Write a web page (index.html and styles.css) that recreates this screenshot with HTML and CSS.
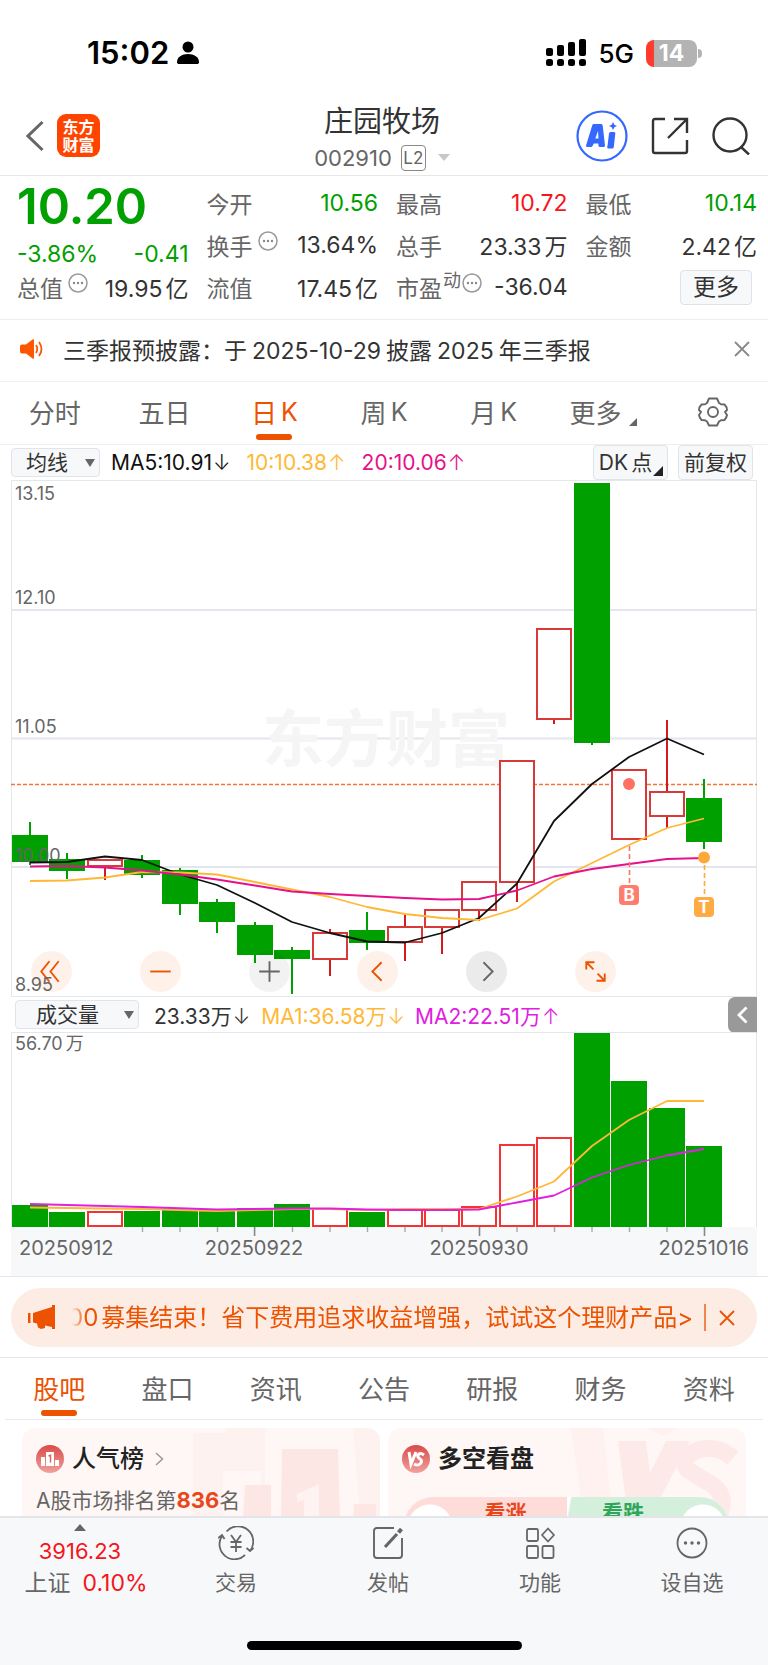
FILE: index.html
```html
<!DOCTYPE html>
<html lang="zh-CN">
<head>
<meta charset="utf-8">
<meta name="viewport" content="width=device-width, initial-scale=1">
<title>庄园牧场 002910</title>
<link rel="stylesheet" href="styles.css">
</head>
<body>
<div class="app">
  <div class="status">
    <div class="status-left">
      <span class="clock">15:02</span>
      <svg width="22" height="24" viewBox="0 0 22 24"><circle cx="11" cy="6" r="5.5"/><path d="M0 21c0-5 5-8 11-8s11 3 11 8c0 1.500-.8 2-2 2H2c-1.200 0-2-.5-2-2z"/></svg>
    </div>
    <div class="status-right">
      <svg width="40" height="28" viewBox="0 0 40 28"><rect x="0" y="9" width="7" height="8" rx="2"/><rect x="11" y="6" width="7" height="11" rx="2"/><rect x="22" y="3" width="7" height="14" rx="2"/><rect x="33" y="0" width="7" height="17" rx="2"/><rect x="0" y="20" width="7" height="7" rx="2.500"/><rect x="11" y="20" width="7" height="7" rx="2.500"/><rect x="22" y="20" width="7" height="7" rx="2.500"/><rect x="33" y="20" width="7" height="7" rx="2.500"/></svg>
      <span class="net">5G</span>
      <span class="battery">14</span>
    </div>
  </div>

  <header class="head">
    <div class="head-left">
      <button class="plain" aria-label="返回"><svg width="18" height="32" viewBox="0 0 18 32" fill="none" stroke="#666" stroke-width="3"><path d="M16.500 2L2 16l14.500 14"/></svg></button>
      <a class="logo" href="#"><span>东方</span><span>财富</span></a>
    </div>
    <div class="head-title">
      <h1>庄园牧场</h1>
      <div class="code"><span>002910</span><span class="level">L2</span><i class="caret"></i></div>
    </div>
    <div class="head-right">
      <button class="plain" aria-label="Ai"><svg width="52" height="52" viewBox="0 0 52 52"><circle cx="26" cy="26" r="24.500" fill="none" stroke="#3468ff" stroke-width="2.200"/><path fill="#3468ff" fill-rule="evenodd" d="M17.500 14h7.500q1.500 0 1.700 1.500l2.300 20q0 1.500-1.500 1.500h-3.500q-1.500 0-1.500-1.500l-.2-2h-4.500l-1 2q-.7 1.500-2 1.500h-3.500q-2 0-1.200-1.800l6-19.500q.4-1.700 1.400-1.700zM22 21l-2.700 7.500h3.200zM34.500 22h3.500q1.500 0 1.300 1.500l-1.500 13.500q-.2 1.500-1.600 1.500h-3.700q-1.500 0-1.300-1.500l.5-2.500 1.300-11q.2-1.500 1.500-1.500zM37 12l1.300 2.700 2.700 1.300-2.700 1.300-1.300 2.700-1.300-2.700-2.700-1.300 2.700-1.300z"/></svg></button>
      <button class="plain" aria-label="分享"><svg width="38" height="38" viewBox="0 0 38 38" fill="none" stroke="#333" stroke-width="2.400"><path d="M14 2H4q-2 0-2 2v30q0 2 2 2h30q2 0 2-2V23M23 2h13v14M36 2L17 21"/></svg></button>
      <button class="plain" aria-label="搜索"><svg width="38" height="38" viewBox="0 0 38 38" fill="none" stroke="#333" stroke-width="2.400"><circle cx="18" cy="18" r="16.500"/><path d="M29 30l8 7.500"/></svg></button>
    </div>
  </header>

  <main class="content">
    <section class="quote">
      <div class="quote-col">
        <div class="price">10.20</div>
        <div class="change down"><span>-3.86%</span><span>-0.41</span></div>
        <div class="row"><span class="key">总值<svg class="info" width="20" height="20" viewBox="0 0 20 20"><circle cx="10" cy="10" r="9" fill="none" stroke="#999" stroke-width="1.500"/><g fill="#888"><circle cx="6" cy="10" r="1.200"/><circle cx="10" cy="10" r="1.200"/><circle cx="14" cy="10" r="1.200"/></g></svg></span><span>19.95<span class="unit">亿</span></span></div>
      </div>
      <div class="quote-col">
        <div class="row"><span class="key">今开</span><span class="down">10.56</span></div>
        <div class="row"><span class="key">换手<svg class="info" width="20" height="20" viewBox="0 0 20 20"><circle cx="10" cy="10" r="9" fill="none" stroke="#999" stroke-width="1.500"/><g fill="#888"><circle cx="6" cy="10" r="1.200"/><circle cx="10" cy="10" r="1.200"/><circle cx="14" cy="10" r="1.200"/></g></svg></span><span>13.64%</span></div>
        <div class="row"><span class="key">流值</span><span>17.45<span class="unit">亿</span></span></div>
      </div>
      <div class="quote-col">
        <div class="row"><span class="key">最高</span><span class="up">10.72</span></div>
        <div class="row"><span class="key">总手</span><span>23.33<span class="unit">万</span></span></div>
        <div class="row"><span class="key">市盈<span class="sup">动</span><svg class="info tight" width="20" height="20" viewBox="0 0 20 20"><circle cx="10" cy="10" r="9" fill="none" stroke="#999" stroke-width="1.500"/><g fill="#888"><circle cx="6" cy="10" r="1.200"/><circle cx="10" cy="10" r="1.200"/><circle cx="14" cy="10" r="1.200"/></g></svg></span><span>-36.04</span></div>
      </div>
      <div class="quote-col">
        <div class="row"><span class="key">最低</span><span class="down">10.14</span></div>
        <div class="row"><span class="key">金额</span><span>2.42<span class="unit">亿</span></span></div>
        <div class="row end"><button class="more">更多</button></div>
      </div>
    </section>

    <section class="notice">
      <svg width="24" height="22" viewBox="0 0 24 22"><path fill="#ff5500" d="M2 6.500h4L12.500 1.500q1.500-1 1.500.8v17.400q0 1.800-1.500.8L6 15.500H2q-2 0-2-2v-5q0-2 2-2z"/><path fill="none" stroke="#ff5500" stroke-width="1.800" d="M16 7q2.500 4 0 8M19 4q5 7 0 14"/></svg>
      <p>三季报预披露：于<span class="num">2025-10-29</span>披露<span class="num">2025</span>年三季报</p>
      <button class="plain" aria-label="关闭"><svg width="16" height="16" viewBox="0 0 16 16" fill="none" stroke="#888" stroke-width="1.800"><path d="M1 1l14 14M15 1L1 15"/></svg></button>
    </section>

    <nav class="ktabs">
      <button>分时</button>
      <button>五日</button>
      <button class="on">日<span class="kk">K</span></button>
      <button>周<span class="kk">K</span></button>
      <button>月<span class="kk">K</span></button>
      <button>更多<i class="corner"></i></button>
      <button aria-label="设置"><svg width="30" height="30" viewBox="0 0 30 30" fill="none" stroke="#666" stroke-width="1.900" stroke-linejoin="round"><path d="M11 1.500h8l2 4.500 2 1.200 3.500.3q2.500 2.500 2.500 5.500l-2 2 2 3q-.5 3-2.500 5l-3.500.3-2 1.200-2 4h-8l-2-4-2-1.200-3.500-.3Q1.500 21 1 18l2-3-2-2q0-3 2.500-5.500L7 7.200 9 6z"/><circle cx="15" cy="15" r="5"/></svg></button>
    </nav>

    <section class="market">
      <div class="bar">
        <span class="pick pick-ma"><select aria-label="指标"><option>均线</option></select></span>
        <span class="ma5">MA5:10.91<span class="arrow">↓</span></span>
        <span class="ma10">10:10.38<span class="arrow">↑</span></span>
        <span class="ma20">20:10.06<span class="arrow">↑</span></span>
        <div class="bar-right">
          <button class="chip">DK<span class="unit">点</span><i class="corner dark"></i></button>
          <button class="chip">前复权</button>
        </div>
      </div>

      <div class="kchart">
        <svg class="plot" viewBox="11 0 746 517">
          <g class="grid"><path d="M11.500 .5H756.500V516.500H11.500z"/><path d="M11 130H757M11 258.500H757M11 387H757" stroke-width="2"/></g>
          <text class="mark" x="262" y="282">东方财富</text>
          <path d="M11 304.500H757" stroke="#f0763a" stroke-width="1.600" stroke-dasharray="4 2"/>
          <g class="g">
            <path d="M30 342V385M67 373V399M142 375V398M180 388V435M217 419V453M255 442V483M292 467V514M367 432V470M592 3V265M704 299V369"/>
            <rect x="12" y="355" width="36" height="27"/><rect x="49" y="379" width="36" height="12"/><rect x="124" y="380" width="36" height="15"/><rect x="162" y="390" width="36" height="34"/><rect x="199" y="422" width="36" height="20"/><rect x="237" y="445" width="36" height="30"/><rect x="274" y="470" width="36" height="9"/><rect x="349" y="450" width="36" height="13"/><rect x="574" y="3" width="36" height="260"/><rect x="686" y="318" width="36" height="44"/>
          </g>
          <g class="r">
            <path d="M105 387V400M330 449V453M330 479V496M405 434V446M405 461V481M442 447V474M479 430V441M517 402V422M554 239V244M667 240V311M667 336V348"/>
            <rect x="88" y="380" width="34" height="6"/><rect x="313" y="453" width="34" height="26"/><rect x="388" y="447" width="34" height="15"/><rect x="425" y="430" width="34" height="17"/><rect x="462" y="402" width="34" height="28"/><rect x="500" y="281" width="34" height="121"/><rect x="537" y="149" width="34" height="90"/><rect x="612" y="290" width="34" height="69"/><rect x="650" y="312" width="34" height="24"/>
          </g>
          <g class="axis">
            <text x="15" y="20">13.15</text><text x="15" y="124">12.10</text><text x="15" y="253">11.05</text><text x="15" y="382">10.00</text>
          </g>
          <g class="line">
            <path stroke="#111" d="M30 382.500L67 382 105 376.500 142 380 180 394.500 217 405 255 423 292 442 330 453 367 461.500 405 462.500 442 453 479 438 517 403.500 554 341 592 304 629 277 667 258.500 704 274.500"/>
            <path stroke="#ffb836" d="M30 401L67 400.500 105 397.500 142 392 180 392.500 217 394.500 255 402 292 409.500 330 417 367 427 405 434 442 438 479 440 517 428.500 554 401.500 592 383 629 365 667 348 704 338.500"/>
            <path stroke="#e5118b" d="M30 386.500L67 386 105 387.500 142 390.500 180 394.500 217 399.500 255 405.500 292 411.500 330 414 367 416 405 418 442 419.500 479 419 517 410.500 554 396.500 592 389 629 384 667 379 704 378"/>
          </g>
          <circle cx="629" cy="304" r="6" fill="#ff7262"/><circle cx="704" cy="377.500" r="6" fill="#ffa83a"/>
          <path d="M629.500 366V405" stroke="#ff7262" stroke-width="1.600" stroke-dasharray="5 3"/><path d="M704.500 385V417" stroke="#ffa83a" stroke-width="1.600" stroke-dasharray="5 3"/>
          <rect x="619" y="405" width="20" height="20" rx="4" fill="#ff7d6e"/><text class="flag" x="629" y="421">B</text>
          <rect x="694" y="417" width="20" height="20" rx="4" fill="#ffab43"/><text class="flag" x="704" y="433">T</text>
        </svg>
        <div class="tools">
          <button aria-label="最早"><svg viewBox="0 0 40 40"><path d="M18 10l-8 10 8 10M27 10l-8 10 8 10"/></svg></button>
          <button aria-label="缩小"><svg viewBox="0 0 40 40"><path d="M10 20h20"/></svg></button>
          <button class="gray light" aria-label="放大"><svg viewBox="0 0 40 40"><path d="M10 20h20M20 10v20"/></svg></button>
          <button aria-label="向左"><svg viewBox="0 0 40 40"><path d="M24 11l-9 9 9 9"/></svg></button>
          <button class="gray" aria-label="向右"><svg viewBox="0 0 40 40"><path d="M17 11l9 9-9 9"/></svg></button>
          <button aria-label="全屏"><svg viewBox="0 0 40 40"><path d="M11 18v-7h8M11 11l7 7M29 22v7h-8M29 29l-7-7"/></svg></button>
        </div>
        <span class="low">8.95</span>
      </div>

      <div class="bar bar-vol">
        <span class="pick pick-vol"><select aria-label="副图指标"><option>成交量</option></select></span>
        <span class="vol">23.33万<span class="arrow">↓</span></span>
        <span class="ma10">MA1:36.58万<span class="arrow">↓</span></span>
        <span class="vma2">MA2:22.51万<span class="arrow">↑</span></span>
        <button class="fold" aria-label="展开"><svg width="11" height="18" viewBox="0 0 11 18" fill="none" stroke="#fff" stroke-width="2.800"><path d="M9.500 1.500L2 9l7.500 7.500"/></svg></button>
      </div>

      <svg class="plot" viewBox="11 0 746 244">
        <rect x="11" y="195" width="746" height="49" fill="#f7f8fa"/>
        <path class="frame" d="M11.500 195V.5H756.500V195"/>
        <text class="axis" x="15" y="18">56.70<tspan dx="3">万</tspan></text>
        <g class="g">
          <rect x="12" y="173" width="36" height="22"/><rect x="49" y="180" width="36" height="15"/><rect x="124" y="179" width="36" height="16"/><rect x="162" y="178" width="36" height="17"/><rect x="199" y="179" width="36" height="16"/><rect x="237" y="176" width="36" height="19"/><rect x="274" y="172" width="36" height="23"/><rect x="349" y="180" width="36" height="15"/><rect x="574" y="1" width="36" height="194"/><rect x="611" y="49" width="36" height="146"/><rect x="649" y="76" width="36" height="119"/><rect x="686" y="114" width="36" height="81"/>
        </g>
        <g class="r bright">
          <rect x="88" y="180" width="34" height="14"/><rect x="313" y="177" width="34" height="17"/><rect x="388" y="178" width="34" height="16"/><rect x="425" y="178" width="34" height="16"/><rect x="462" y="175" width="34" height="19"/><rect x="500" y="113" width="34" height="81"/><rect x="537" y="106" width="34" height="88"/>
        </g>
        <g class="line">
          <path stroke="#ffb836" d="M30 175.500L67 176 142 177 217 179 255 178 292 177 330 177 367 178 405 177 442 177 479 177 517 164.500 554 149.500 592 114 629 88 667 69 704 69"/>
          <path stroke="#e020e0" d="M30 172L105 174 142 175 217 177.500 292 176.500 330 176.500 367 177.500 405 178 442 178 479 177.500 517 170.500 554 163.500 592 145.500 629 133 667 123.500 704 117"/>
        </g>
        <path stroke="#aaa" stroke-width="1.400" d="M142.500 195v5M180 195v5M217.500 195v5M292.500 195v5M330 195v5M367.500 195v5M405 195v5M442 195v5M517 195v5M554.500 195v5M592 195v5M629.500 195v5M667 195v5"/>
        <path stroke="#888" stroke-width="1.600" d="M254.600 195v9M479.500 195v9M704.500 195v9"/>
        <g class="date"><text x="19" y="223">20250912</text><text x="254" y="223" text-anchor="middle">20250922</text><text x="479" y="223" text-anchor="middle">20250930</text><text x="749" y="223" text-anchor="end">20251016</text></g>
      </svg>
    </section>

    <section class="promo-wrap">
      <div class="promo">
        <svg width="28" height="25" viewBox="0 0 28 25" fill="#ec5200"><path d="M0 8h2.500v10H0zM5 8L24 2V0h3v24h-3v-2l-7-1.500V23l-4 1-3-1.500-1-4-4-1z"/></svg>
        <p><a href="#">00<span class="unit">募集结束！省下费用追求收益增强，试试这个理财产品&gt;</span></a></p>
        <button class="plain" aria-label="关闭广告"><svg width="16" height="16" viewBox="0 0 16 16" fill="none" stroke="#ec5200" stroke-width="1.800"><path d="M1 1l14 14M15 1L1 15"/></svg></button>
      </div>
    </section>

    <nav class="tabs">
      <button class="on">股吧</button><button>盘口</button><button>资讯</button><button>公告</button><button>研报</button><button>财务</button><button>资料</button>
    </nav>

    <section class="cards">
      <article class="card">
        <svg class="deco" width="190" height="90" viewBox="0 0 190 90"><path fill="#fef2f0" d="M3 5h32V0h40v90H3zM163 0h27v90h-20z"/><path fill="#fff7f5" d="M33 43h38v47H33z"/><path fill="#fce7e5" d="M55 57h26v33H53zM92 21h56l2 69H91zM164 76h22v14h-23z"/><path fill="#fff3f1" d="M107 66l22-10v34h-15V72l-7 2z"/></svg>
        <h2><svg width="28" height="28" viewBox="0 0 28 28"><defs><linearGradient id="rd" x1="0" y1="0" x2="0" y2="1"><stop offset="0" stop-color="#d94b48"/><stop offset="1" stop-color="#f0a19d"/></linearGradient></defs><circle cx="14" cy="14" r="14" fill="url(#rd)"/><path fill="#fff" d="M5 12h4v9H5zM10 7h8v14h-8zM19 15h4v6h-4z"/><path fill="none" stroke="#d96460" stroke-width="1.500" d="M12.500 11l2-.7v7.200"/></svg>人气榜<svg class="go" width="9" height="14" viewBox="0 0 9 14" fill="none" stroke="#999" stroke-width="1.500"><path d="M1 1l6.500 6L1 13"/></svg></h2>
        <p class="rank">A股市场排名第<b>836</b>名</p>
      </article>
      <article class="card">
        <svg class="deco" width="180" height="90" viewBox="0 0 180 90"><path fill="#fef1ef" d="M5 0h32l10 90H18zM80 0h30l-12 8z"/><path fill="#fdeae8" d="M52 13h28l4 32 16-32h24L84 90H62z"/><path fill="none" stroke="#fdeae8" stroke-width="17" d="M167 30Q150 16 132 22q-20 8-10 20l26 16q14 12 4 32"/></svg>
        <h2><svg width="28" height="28" viewBox="0 0 28 28"><circle cx="14" cy="14" r="14" fill="url(#rd)"/><path fill="none" stroke="#fff" stroke-width="3" d="M7 7l2 12 5-12M22 10q-4-3-6 0-1 2 2 4t0 5q-2 2-6 0"/></svg>多空看盘</h2>
        <div class="vote"><button class="vote-up">看涨</button><button class="vote-down">看跌</button></div>
      </article>
    </section>
  </main>

  <footer class="dock">
    <div class="dock-row">
      <button class="index"><i class="tri"></i><span class="up">3916.23</span><span class="dock-label">上证<span class="up pct">0.10%</span></span></button>
      <button class="dock-item"><svg width="36" height="34" viewBox="0 0 36 34" fill="none" stroke="#666" stroke-width="1.800"><path d="M8.500 5.500a15 15 0 0 1 23 20M27 29A15 15 0 0 1 4 10M0 12l4-3 2.500 4M28.500 22l3.500 3 3.500-3M13 9l5 7 5-7M12.500 16h11M12.500 21h11M18 16v10"/></svg><span>交易</span></button>
      <button class="dock-item"><svg width="34" height="34" viewBox="0 0 34 34" fill="none" stroke="#666" stroke-width="1.900"><path d="M23 2H6Q3 2 3 5v24q0 3 3 3h22q3 0 3-3V12"/><path stroke-width="3.200" d="M14 21L26 8"/><path stroke-width="4" d="M27.500 6.500L30.500 3"/></svg><span>发帖</span></button>
      <button class="dock-item"><svg width="30" height="34" viewBox="0 0 30 34" fill="none" stroke="#666" stroke-width="1.800"><rect x="2" y="3" width="11" height="12" rx="1.500"/><rect x="2" y="20" width="11" height="12" rx="1.500"/><rect x="17.500" y="20" width="11" height="12" rx="1.500"/><path stroke-linejoin="round" d="M23 2.500l6 6.500-6 6.500L17 9z"/></svg><span>功能</span></button>
      <button class="dock-item"><svg width="34" height="34" viewBox="0 0 34 34"><circle cx="17" cy="17" r="14.500" fill="none" stroke="#666" stroke-width="1.800"/><g fill="#666"><circle cx="10.500" cy="17" r="1.700"/><circle cx="17" cy="17" r="1.700"/><circle cx="23.500" cy="17" r="1.700"/></g></svg><span>设自选</span></button>
    </div>
    <div class="home"></div>
  </footer>
</div>
</body>
</html>
```
FILE: styles.css
```css
* { box-sizing: border-box; margin: 0; padding: 0; }
body { font-family: Inter, "Noto Sans CJK SC", sans-serif; color: #333; background: #fff; }
button, select { font: inherit; color: inherit; background: none; border: 0; }
button { cursor: pointer; }
a { color: inherit; text-decoration: none; }
svg { display: block; flex: none; }
i { display: block; }
.plain { display: flex; align-items: center; }
.up { color: #f4161c; }
.down { color: #00a000; }
.unit { margin-left: 3px; }

.app { height: 100vh; display: flex; flex-direction: column; overflow: hidden; }
.content { flex: 1; min-height: 0; overflow-y: auto; scrollbar-width: none; }

.status { flex: none; height: 96px; padding: 10px 67px 0 87px; display: flex; align-items: center; justify-content: space-between; color: #000; }
.status-left { display: flex; align-items: center; gap: 8px; }
.clock { font-size: 31px; font-weight: 600; line-height: 40px; }
.status-right { display: flex; align-items: center; gap: 12px; }
.net { font-size: 26px; font-weight: 500; }
.battery { position: relative; width: 51px; height: 27px; border-radius: 8px; background: linear-gradient(90deg, #ff3b30 8px, #b3b3b3 8px); color: #fff; font-size: 23px; font-weight: 700; line-height: 27px; text-align: center; margin-right: 4px; }
.battery::after { content: ""; position: absolute; left: 52px; top: 9px; width: 4px; height: 9px; border-radius: 0 4px 4px 0; background: #b3b3b3; }

.head { flex: none; height: 80px; padding: 0 18px; display: grid; grid-template-columns: 1fr auto 1fr; align-items: center; border-bottom: 1px solid #e6e6e6; }
.head-left { display: flex; align-items: center; gap: 13px; padding-left: 8px; }
.logo { width: 43px; height: 43px; border-radius: 9px; background: #ff4400; color: #fff; display: flex; flex-direction: column; align-items: center; justify-content: center; font-size: 16px; line-height: 18px; font-weight: 700; }
.head-title { text-align: center; padding: 4px 4px 0 0; }
.head-title h1 { font-size: 29px; line-height: 40px; font-weight: 400; }
.code { display: flex; align-items: center; justify-content: center; gap: 9px; height: 32px; font-size: 22px; color: #666; }
.level { border: 1px solid #888; border-radius: 4px; width: 25px; height: 26px; font-size: 17px; line-height: 24px; }
.caret { border: 6px solid transparent; border-top: 7px solid #c8c8c8; border-bottom: 0; margin-left: 3px; }
.head-right { display: flex; align-items: center; justify-content: flex-end; gap: 23px; }

.quote { display: grid; grid-template-columns: repeat(4, 1fr); gap: 18px; padding: 6px 11px 11px 17px; border-bottom: 1px solid #eee; font-size: 23px; }
.price { height: 49px; line-height: 50px; font-size: 49px; font-weight: 600; color: #00a000; }
.change { height: 35px; padding-top: 7px; line-height: 32px; display: flex; justify-content: space-between; }
.row { height: 42px; display: flex; align-items: center; justify-content: space-between; white-space: nowrap; }
.row.end { justify-content: flex-end; padding-right: 5px; }
.key { display: flex; align-items: center; color: #666; }
.info { margin: 0 0 8px 5px; }
.info.tight { margin-left: 1px; }
.sup { font-size: 18px; line-height: 20px; margin: 0 0 12px 1px; }
.more { width: 72px; height: 35px; line-height: 31px; font-size: 23px; background: #f7f8fa; border: 1px solid #dfe2e9; border-radius: 4px; }

.notice { height: 62px; padding: 0 18px 3px 20px; display: flex; align-items: center; border-bottom: 1px solid #f1f1f1; font-size: 23px; }
.notice p { flex: 1; margin-left: 19px; white-space: nowrap; }
.num { margin: 0 5px; }

.ktabs { height: 63px; display: flex; border-bottom: 1px solid #eee; }
.ktabs button, .tabs button { flex: 1; position: relative; display: flex; align-items: center; justify-content: center; font-size: 26px; color: #666; padding-bottom: 3px; }
.ktabs .kk { margin-left: 4px; font-size: 25px; }
.ktabs .on, .tabs .on { color: #ec5200; }
.on::after { content: ""; position: absolute; bottom: 4px; left: 50%; width: 36px; height: 6px; margin-left: -18px; border-radius: 3px; background: #ec5200; }
.corner { border: 4px solid #666; border-top-color: transparent; border-left-color: transparent; align-self: flex-end; margin: 0 0 15px 8px; }

.market { padding: 0 11px; }
.bar { height: 35px; display: flex; align-items: center; font-size: 21px; white-space: nowrap; }
.arrow { font-weight: 300; margin-left: 1px; }
.pick { position: relative; display: block; margin-right: 11px; }
.pick select { appearance: none; width: 100%; height: 29px; padding: 0 0 0 14px; background: #f7f8fa; border: 1px solid #e1e4ea; border-radius: 4px; line-height: 25px; }
.pick::after { content: ""; position: absolute; right: 5px; top: 11px; border: 5px solid transparent; border-top: 8px solid #666; border-bottom: 0; pointer-events: none; }
.pick-ma { width: 89px; }
.pick-vol { width: 124px; margin: 0 15px 0 4px; }
.pick-vol select { padding-left: 20px; }
.ma5 { color: #111; margin-right: 16px; }
.ma10 { color: #ffb836; margin-right: 16px; }
.ma20 { color: #e5118b; }
.vol { margin-right: 11px; }
.vma2 { color: #e020e0; }
.bar-vol .ma10 { margin-right: 10px; }
.bar-right { margin-left: auto; display: flex; gap: 10px; padding-right: 4px; }
.chip { position: relative; width: 75px; height: 35px; line-height: 31px; background: #f7f8fa; border: 1px solid #e1e4ea; border-radius: 4px; padding-right: 10px; }
.chip:last-child { padding: 0; }
.corner.dark { position: absolute; right: 4px; bottom: 3px; margin: 0; border-width: 5px; border-right-color: #222; border-bottom-color: #222; }
.fold { margin-left: auto; width: 29px; height: 36px; background: #999; border-radius: 7px 0 0 7px; display: flex; align-items: center; justify-content: center; }

.kchart { position: relative; }
.plot { width: 100%; height: auto; }
.plot path { fill: none; }
.grid path, .frame { stroke: #e4e6ee; }
.mark { font: 700 62px "Noto Sans CJK SC", sans-serif; fill: #f5f5f5; }
.g rect { fill: #00a000; }
.g path { stroke: #00a000; stroke-width: 2; }
.r rect { fill: #fff; stroke: #d83a3a; stroke-width: 2; }
.r path { stroke: #d5191c; stroke-width: 2; }
.r.bright rect { stroke: #f23434; }
.line path { stroke-width: 1.8; stroke-linejoin: round; }
.axis, .low { font-size: 18px; fill: #666; color: #666; }
.date { font-size: 20px; fill: #666; }
.flag { font-size: 17px; font-weight: 700; fill: #fff; text-anchor: middle; }
.tools { position: absolute; left: 20px; bottom: 5px; width: 585px; max-width: 90%; display: flex; justify-content: space-between; }
.tools button { width: 41px; height: 41px; border-radius: 50%; background: rgba(245, 95, 20, .09); }
.tools svg { width: 41px; height: 41px; fill: none; stroke: #ec5200; stroke-width: 1.8; }
.tools .gray { background: rgba(0, 0, 0, .08); }
.tools .light { background: rgba(0, 0, 0, .05); }
.tools .gray svg { stroke: #666; }
.low { position: absolute; left: 4px; bottom: 2px; line-height: 20px; }

.promo-wrap { padding: 11px 11px 10px; border-top: 1px solid #e4e6ec; border-bottom: 1px solid #e4e6ec; }
.promo { height: 59px; border-radius: 30px; background: #fdece4; padding: 0 22px 0 17px; display: flex; align-items: center; color: #ec5200; }
.promo p { flex: 1; min-width: 0; height: 36px; line-height: 36px; font-size: 24px; margin: 0 12px 0 16px; overflow: hidden; white-space: nowrap; -webkit-mask-image: linear-gradient(90deg, transparent, #000 14px); mask-image: linear-gradient(90deg, transparent, #000 14px); }
.promo p a { display: block; text-indent: -4px; }
.promo .plain { height: 27px; border-left: 2px solid #f08550; padding-left: 13px; }

.tabs { height: 62px; margin: 0 5px; display: flex; border-bottom: 1px solid #e9ebf1; }
.tabs .on::after { bottom: 3px; }

.cards { display: grid; grid-template-columns: 1fr 1fr; gap: 8px; padding: 8px 22px; }
.card { position: relative; height: 130px; border-radius: 13px; overflow: hidden; background: #fff7f5; padding: 13px 14px; }
.deco { position: absolute; right: 0; top: 0; }
.card h2 { position: relative; display: flex; align-items: center; gap: 8px; height: 36px; font-size: 24px; font-weight: 500; line-height: 34px; color: #222; }
.card h2 .go { margin-left: 3px; }
.card:last-child h2 { font-weight: 700; }
.rank { position: relative; margin-top: 7px; font-size: 21px; line-height: 32px; color: #666; }
.rank b { color: #e8461b; font-size: 22px; }
.vote { position: relative; margin: 20px 3px 0 2px; height: 58px; border-radius: 29px; overflow: hidden; display: flex; background: #fff; font-size: 21px; font-weight: 700; }
.vote button { flex: 1; height: 58px; line-height: 30px; padding-bottom: 26px; font-weight: 700; }
.vote .vote-up { flex-grow: 1.1; color: #e8461b; padding-left: 40px; background: radial-gradient(circle at 26px 30px, #fff 22px, transparent 23px), linear-gradient(100deg, #fedcd9 96%, #fff 97%); }
.vote-down { color: #2fa65a; padding-right: 50px; background: radial-gradient(circle at right 26px top 30px, #fff 22px, transparent 23px), linear-gradient(100deg, #fff 2%, #d5efdd 3%); }

.dock { flex: none; height: 149px; background: #f7f8fa; border-top: 2px solid #e3e5e9; }
.dock-row { display: flex; height: 110px; font-size: 21px; color: #666; }
.dock-row button { display: flex; flex-direction: column; align-items: center; }
.index { width: 160px; font-size: 22px; padding-top: 6px; }
.index > span { line-height: 32px; }
.index .dock-label { font-size: 23px; padding-left: 12px; }
.tri { border: 6px solid transparent; border-bottom: 7px solid #666; border-top: 0; margin-bottom: 4px; }
.pct { margin-left: 12px; }
.dock-item { flex: 1; padding-top: 8px; gap: 7px; }
.dock-item span { line-height: 32px; }
.home { width: 275px; height: 9px; margin: 13px auto 0; border-radius: 5px; background: #000; }
```
